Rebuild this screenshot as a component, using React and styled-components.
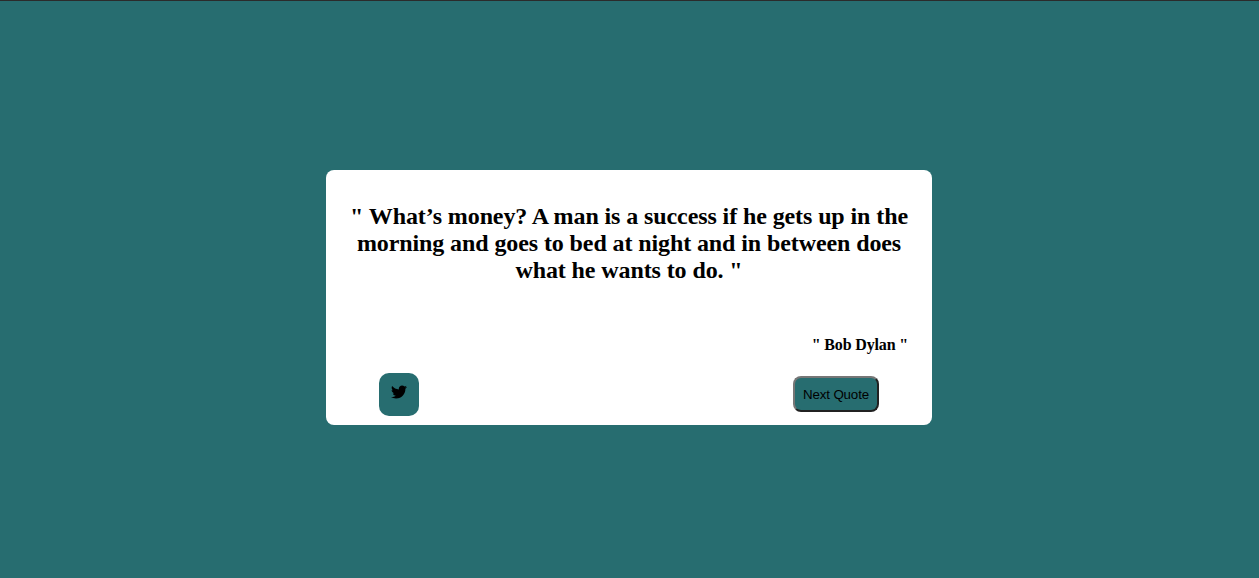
import React from "react";
import styled, { createGlobalStyle } from "styled-components";
import { FaTwitter } from "react-icons/fa";

const GlobalStyle = createGlobalStyle`
  body { margin: 0; background: #276d70; font-family: "Liberation Serif", serif; color: #000; }
`;

const Page = styled.main`
  box-sizing: border-box;
  height: 578px;
  border-top: 1px solid #2b2b2b;
  background: #276d70;
  display: flex;
  justify-content: center;
  align-items: flex-start;
  padding: 169px 1px 0 0;
`;

const Card = styled.section`
  box-sizing: border-box;
  width: 606px;
  height: 255px;
  border-radius: 8px;
  background: #fff;
  display: flex;
  flex-direction: column;
`;

const Quote = styled.h2`
  margin: 33px 20px 0;
  font-size: 24px;
  line-height: 27px;
  font-weight: 700;
  letter-spacing: -0.1px;
  text-align: center;
`;

const Author = styled.h4`
  margin: 52px 24px 0;
  font-size: 16px;
  line-height: 18px;
  font-weight: 700;
  letter-spacing: -0.15px;
  text-align: right;
`;

const Actions = styled.div`
  display: flex;
  justify-content: space-between;
  align-items: flex-start;
  margin: 19px 53px 0;
`;

const TweetLink = styled.a`
  box-sizing: border-box;
  width: 40px;
  height: 43px;
  padding-top: 11px;
  border-radius: 10px;
  background: #276d70;
  display: flex;
  justify-content: center;
  align-items: flex-start;
  font-size: 16px;
`;

const NextButton = styled.button`
  box-sizing: border-box;
  width: 86px;
  height: 36px;
  margin-top: 3px;
  padding: 1px 0 0;
  border: 2px solid;
  border-color: #767676 #212121 #212121 #767676;
  border-radius: 8px;
  background: #276d70;
  color: #000;
  font: 13.333px "Liberation Sans", sans-serif;
  letter-spacing: -0.15px;
  white-space: nowrap;
`;

export default function App() {
  return (
    <Page>
      <GlobalStyle />
      <Card>
        <Quote>" What’s money? A man is a success if he gets up in the morning and goes to bed at night and in between does what he wants to do. "</Quote>
        <Author>" Bob Dylan "</Author>
        <Actions>
          <TweetLink aria-label="Share quote"><FaTwitter /></TweetLink>
          <NextButton>Next Quote</NextButton>
        </Actions>
      </Card>
    </Page>
  );
}
